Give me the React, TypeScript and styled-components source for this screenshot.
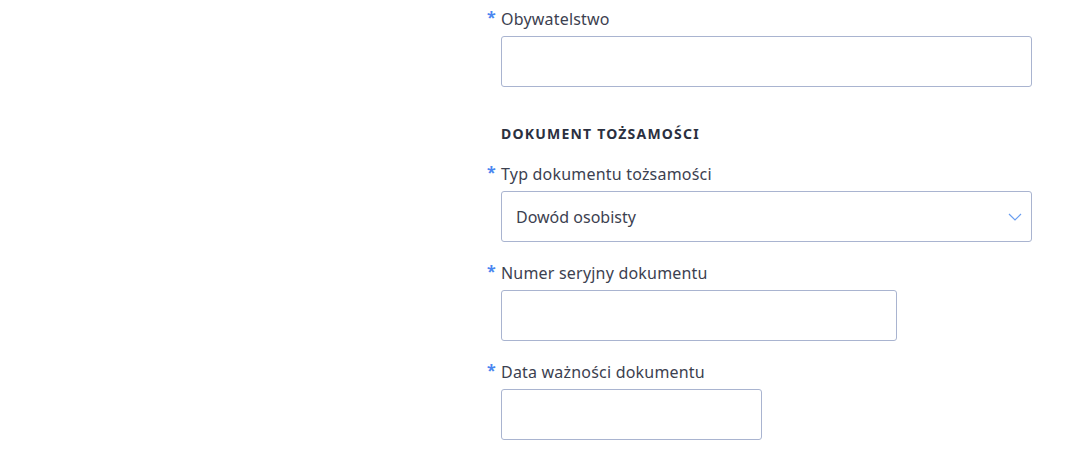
import React from 'react';
import styled, { createGlobalStyle } from 'styled-components';

const GlobalStyle = createGlobalStyle`
    html, body {
        margin: 0;
        padding: 0;
        background: #ffffff;
    }
    body {
        font-family: 'Noto Sans', 'Open Sans', sans-serif;
        color: #3c4150;
    }
`;

const StyledPage = styled.div`
    display: grid;
    grid-template-columns: 487px 545px;
    padding-top: 9px;
`;

const StyledAside = styled.div``;

const StyledForm = styled.form`
    display: flex;
    flex-direction: column;
`;

const StyledField = styled.div<{ $gapAfter: number }>`
    display: flex;
    flex-direction: column;
    gap: 7px;
    margin-bottom: ${({ $gapAfter }) => $gapAfter}px;
`;

const StyledLabel = styled.label`
    display: flex;
    align-items: flex-start;
    height: 20px;
    font-size: 16px;
    line-height: 20px;
    color: #3c4150;
    letter-spacing: 0.2px;
`;

const StyledAsterisk = styled.span`
    width: 14px;
    flex: none;
    color: #4a86f0;
    font-weight: 700;
    font-size: 16px;
    line-height: 16px;
`;

const StyledInput = styled.input<{ $width: number }>`
    box-sizing: border-box;
    margin-left: 14px;
    width: ${({ $width }) => $width}px;
    height: 51px;
    border: 1px solid #a9b4d0;
    border-radius: 3px;
    background: #ffffff;
    padding: 0 14px;
    font: inherit;
    font-size: 16px;
    color: #3c4150;
    outline: none;
`;

const StyledSelect = styled.div`
    box-sizing: border-box;
    margin-left: 14px;
    width: 531px;
    height: 51px;
    border: 1px solid #a9b4d0;
    border-radius: 3px;
    display: flex;
    align-items: center;
    justify-content: space-between;
    padding: 1px 9px 0 14px;
    font-size: 16px;
    color: #3c4150;
`;

const StyledHeading = styled.h3`
    margin: 37px 0 20px 14px;
    height: 20px;
    font-size: 14px;
    line-height: 20px;
    font-weight: 700;
    letter-spacing: 1.2px;
    color: #2b3040;
    text-transform: uppercase;
`;

const Chevron = () => (
    <svg width="14" height="8" viewBox="0 0 14 8" fill="none">
        <path d="M1 1L7 7L13 1" stroke="#6a9ef0" strokeWidth="1.2" />
    </svg>
);

const RequiredLabel = ({ children }: { children: React.ReactNode }) => (
    <StyledLabel>
        <StyledAsterisk>*</StyledAsterisk>
        {children}
    </StyledLabel>
);

export default function App() {
    return (
        <>
            <GlobalStyle />
            <StyledPage>
                <StyledAside />
                <StyledForm>
                    <StyledField $gapAfter={0}>
                        <RequiredLabel>Obywatelstwo</RequiredLabel>
                        <StyledInput $width={531} />
                    </StyledField>
                    <StyledHeading>Dokument tożsamości</StyledHeading>
                    <StyledField $gapAfter={21}>
                        <RequiredLabel>Typ dokumentu tożsamości</RequiredLabel>
                        <StyledSelect>
                            <span>Dowód osobisty</span>
                            <Chevron />
                        </StyledSelect>
                    </StyledField>
                    <StyledField $gapAfter={21}>
                        <RequiredLabel>Numer seryjny dokumentu</RequiredLabel>
                        <StyledInput $width={396} />
                    </StyledField>
                    <StyledField $gapAfter={0}>
                        <RequiredLabel>Data ważności dokumentu</RequiredLabel>
                        <StyledInput $width={261} />
                    </StyledField>
                </StyledForm>
            </StyledPage>
        </>
    );
}
